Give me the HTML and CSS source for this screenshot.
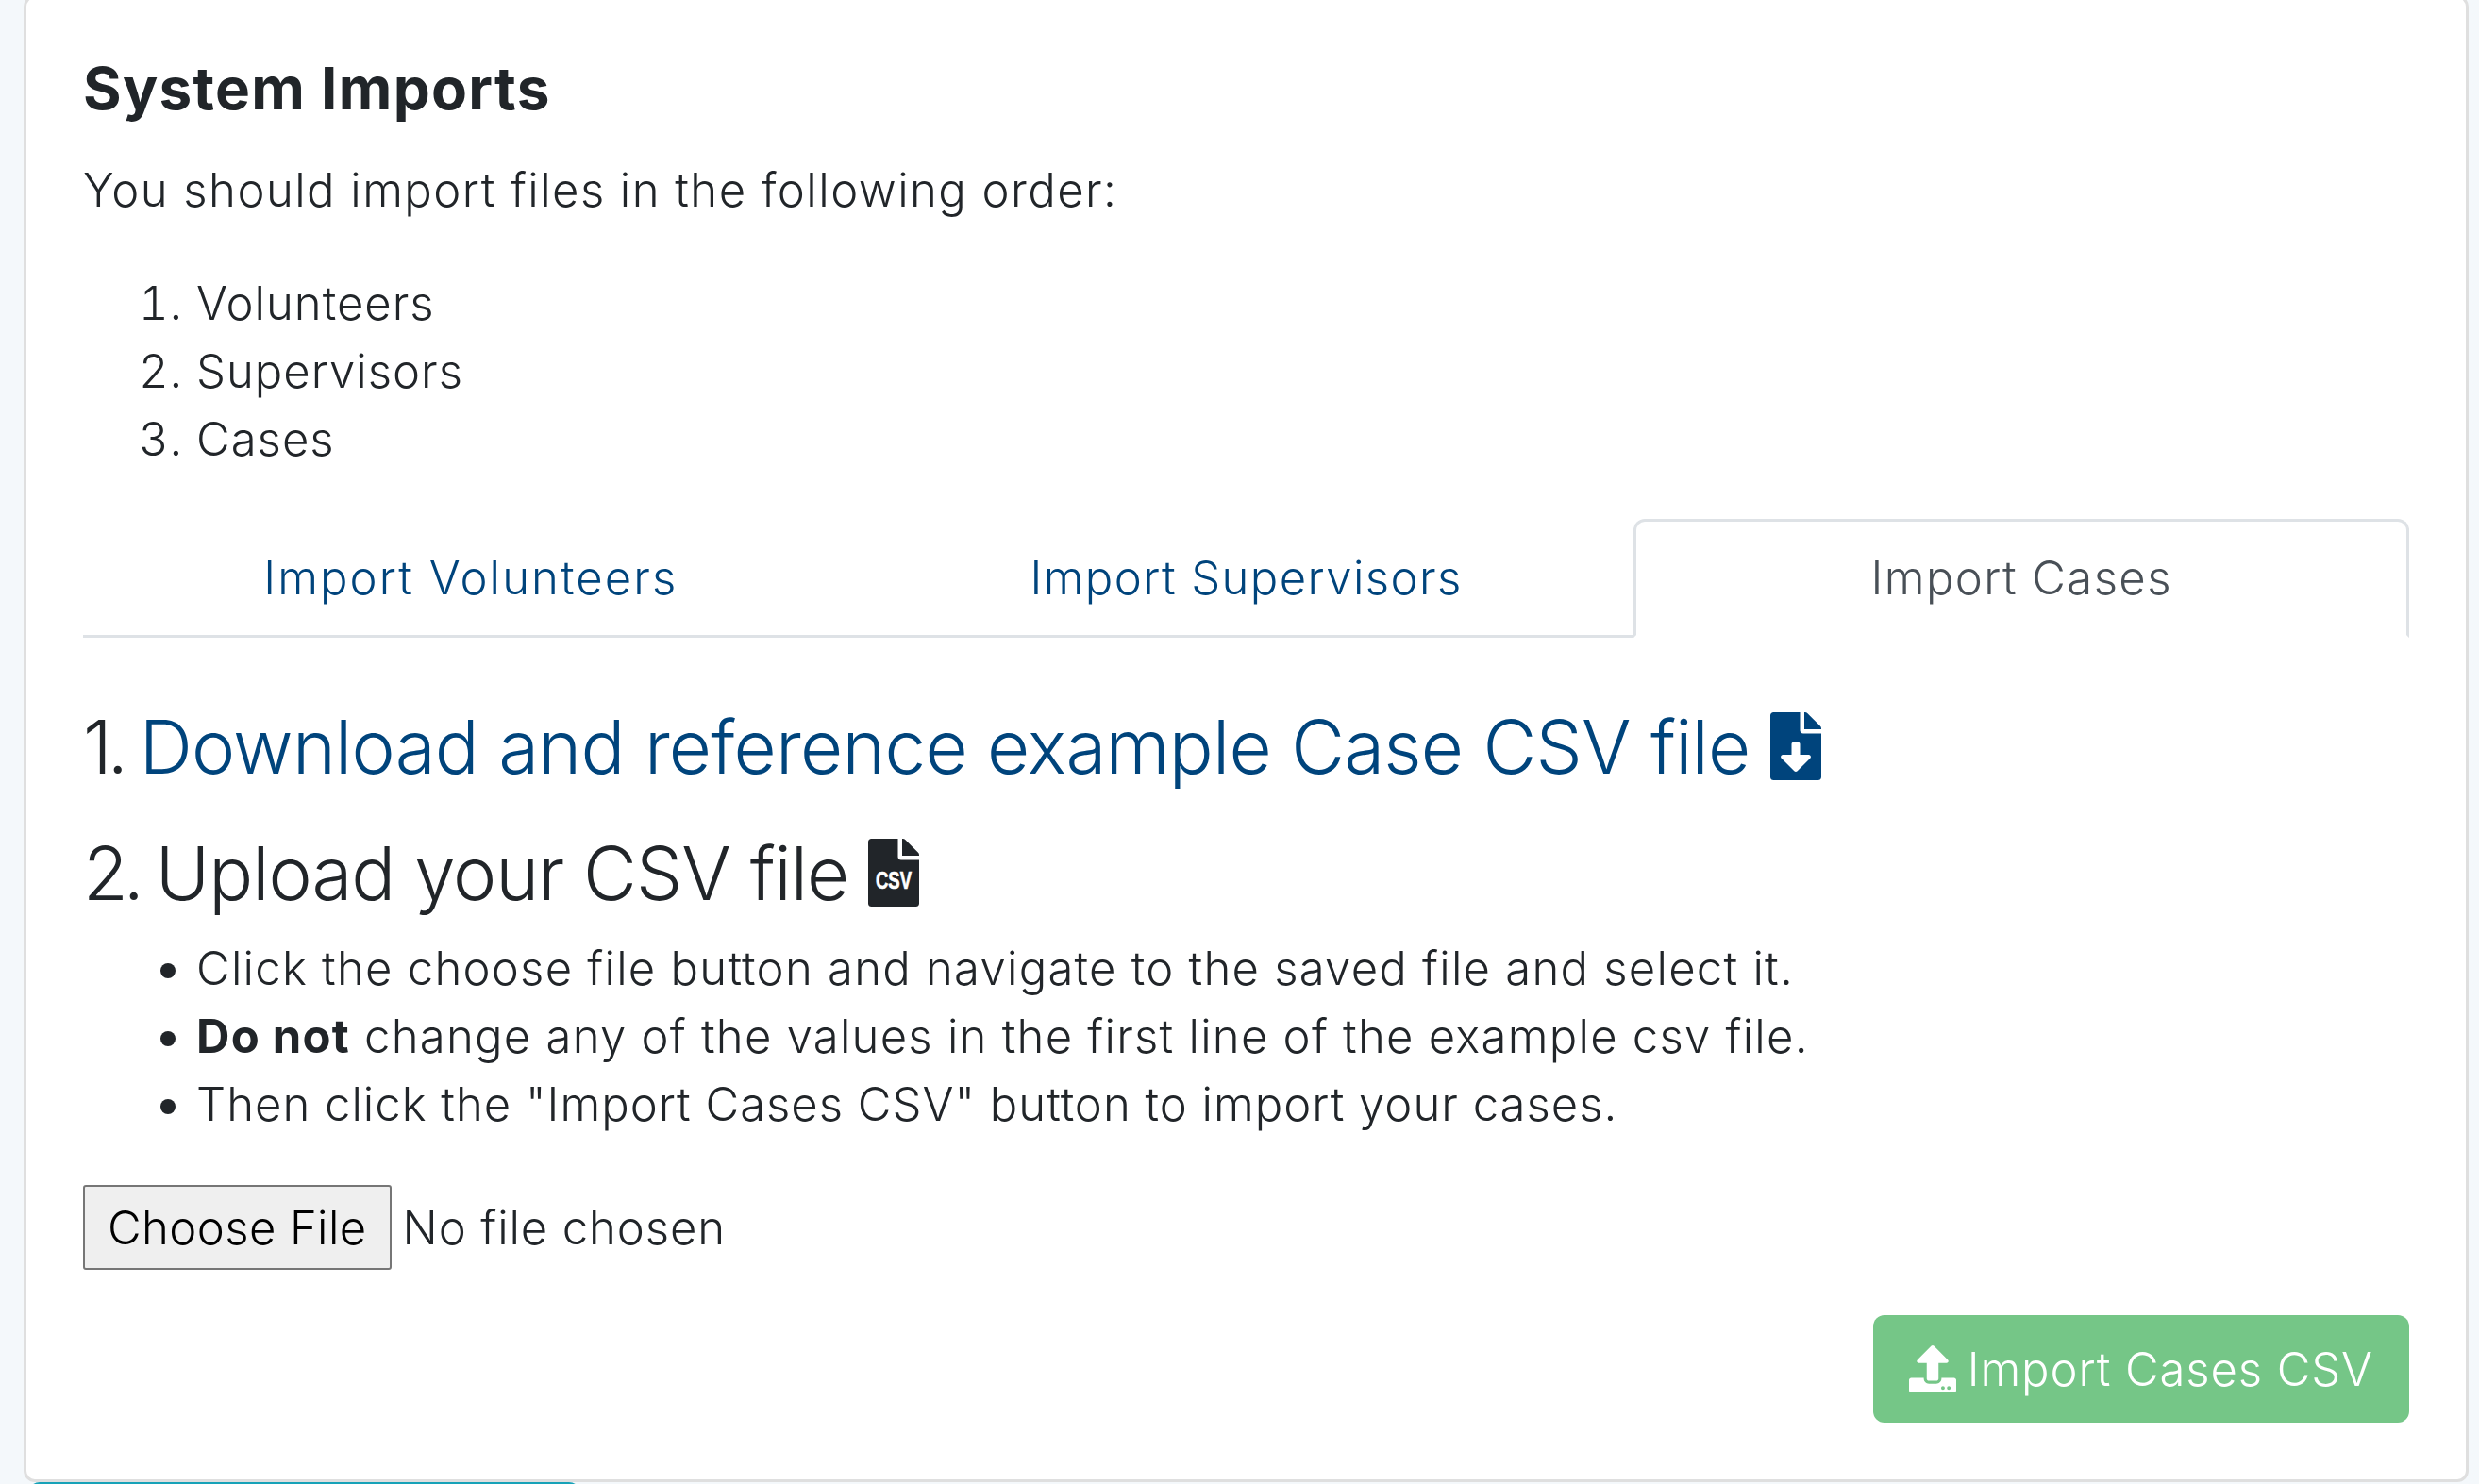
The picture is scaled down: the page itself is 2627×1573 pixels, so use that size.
FILE: index.html
```html
<!DOCTYPE html>
<html>
<head>
  <title>System Imports</title>
  <link rel="stylesheet" href="styles.css">
</head>
<body>

  <div class="card">
    <h5 class="card-title">System Imports</h5>
    <p class="intro">You should import files in the following order:</p>
    <ol class="order-list">
      <li>Volunteers</li>
      <li>Supervisors</li>
      <li>Cases</li>
    </ol>

    <ul class="tabs">
      <li><a href="#" class="tab-link tab-wide">Import Volunteers</a></li>
      <li><a href="#" class="tab-link">Import Supervisors</a></li>
      <li><a href="#" class="tab-link active">Import Cases</a></li>
    </ul>

    <div class="tab-content">
      <h3 class="step"><span class="step-num">1. </span><a href="#" class="step-link">Download and reference example Case CSV file
        <svg class="step-icon" viewBox="0 0 384 512"><path d="M224 136V0H24C10.7 0 0 10.7 0 24v464c0 13.3 10.7 24 24 24h336c13.3 0 24-10.7 24-24V160H248c-13.2 0-24-10.8-24-24zm76.45 211.36l-96.42 95.7c-6.65 6.61-17.39 6.61-24.04 0l-96.42-95.7C73.42 337.29 80.54 320 94.82 320H160v-80c0-8.84 7.16-16 16-16h32c8.84 0 16 7.16 16 16v80h65.18c14.28 0 21.4 17.29 11.27 27.36zM377 105L279.1 7c-4.5-4.5-10.6-7-17-7H256v128h128v-6.1c0-6.3-2.5-12.4-7-16.9z"/></svg></a></h3>
      <h3 class="step step-upload"><span class="step-num">2. </span>Upload your CSV file
        <svg class="step-icon" viewBox="0 0 384 512"><path d="M224 136V0H24C10.7 0 0 10.7 0 24v464c0 13.3 10.7 24 24 24h336c13.3 0 24-10.7 24-24V160H248c-13.2 0-24-10.8-24-24zM377 105L279.1 7c-4.5-4.5-10.6-7-17-7H256v128h128v-6.1c0-6.3-2.5-12.4-7-16.9z"/><text class="csv-label" transform="translate(192 380) scale(.72 1)" text-anchor="middle">CSV</text></svg></h3>
      <ul class="steps-list">
        <li>Click the choose file button and navigate to the saved file and select it.</li>
        <li><strong>Do not</strong> change any of the values in the first line of the example csv file.</li>
        <li class="steps-last">Then click the "Import Cases CSV" button to import your cases.</li>
      </ul>

      <form class="import-form">
        <input type="file" class="file-input">
        <div class="form-actions">
          <button type="button" class="import-btn">
            <svg class="btn-icon" viewBox="0 0 512 512"><path d="M296 384h-80c-13.3 0-24-10.7-24-24V192h-87.7c-17.8 0-26.7-21.5-14.1-34.1L242.3 5.7c7.5-7.5 19.8-7.5 27.3 0l152.2 152.2c12.6 12.6 3.7 34.1-14.1 34.1H320v168c0 13.3-10.7 24-24 24zm216-8v112c0 13.3-10.7 24-24 24H24c-13.3 0-24-10.7-24-24V376c0-13.3 10.7-24 24-24h136v8c0 30.9 25.1 56 56 56h80c30.9 0 56-25.1 56-56v-8h136c13.3 0 24 10.7 24 24zm-124 88c0-11-9-20-20-20s-20 9-20 20 9 20 20 20 20-9 20-20zm64 0c0-11-9-20-20-20s-20 9-20 20 9 20 20 20 20-9 20-20z"/></svg>
            Import Cases CSV
          </button>
        </div>
      </form>
    </div>
  </div>

  <div class="next-card"></div>

</body>
</html>
```

FILE: styles.css
```css
html {
  height: 100%;
  overflow: hidden;
}

body {
  margin: 0;
  height: 100%;
  overflow: hidden;
  padding: 0 11px 0 25px;
  box-sizing: border-box;
  background-color: #f4f8fb;
  font-family: Inter, sans-serif;
  font-size: 49px;
  font-weight: 300;
  line-height: 72px;
  letter-spacing: 1.2px;
  color: #212529;
}

strong {
  font-weight: 700;
}

.card {
  margin-top: -5px;
  padding: 60px;
  height: 1576px;
  box-sizing: border-box;
  background-color: #fff;
  border: 3px solid #dfdfdf;
  border-radius: 12px;
}

.card-title {
  margin: 0 0 36px;
  font-size: 62px;
  font-weight: 700;
  line-height: 72px;
  letter-spacing: 1.3px;
}

.intro {
  margin: 0 0 48px;
  letter-spacing: 1.45px;
}

.order-list {
  margin: 0 0 48px;
  padding-left: 120px;
  letter-spacing: 1px;
}

.tabs {
  display: flex;
  margin: 0;
  padding: 0;
  list-style: none;
  border-bottom: 3px solid #dee2e6;
}

.tabs li {
  flex: 1;
  margin-bottom: -3px;
}

.tab-link {
  display: block;
  padding: 24px 48px;
  text-align: center;
  text-decoration: none;
  letter-spacing: 1.4px;
  color: #00447c;
  border: 3px solid transparent;
  border-radius: 12px 12px 0 0;
}

.tab-wide {
  letter-spacing: 2.1px;
}

.tab-link.active {
  color: #495057;
  background-color: #fff;
  border-color: #dee2e6 #dee2e6 #fff;
}

.tab-content {
  padding-top: 65px;
}

.step {
  margin: 0 0 33px;
  font-size: 78px;
  font-weight: 300;
  line-height: 101px;
  letter-spacing: -0.75px;
}

.step-upload {
  margin-bottom: 15px;
  letter-spacing: -1px;
}

.step-num {
  letter-spacing: -5px;
}

.step-link {
  color: #00447c;
  text-decoration: none;
}

.step-icon {
  width: 54px;
  height: 72px;
  fill: currentColor;
  vertical-align: -7px;
  overflow: visible;
}

.csv-label {
  font-family: "Liberation Sans", sans-serif;
  font-size: 182px;
  font-weight: 700;
  letter-spacing: 0;
  fill: #fff;
  stroke: #fff;
  stroke-width: 5px;
}

.steps-list {
  margin: 0 0 49px;
  padding-left: 120px;
  letter-spacing: 1.25px;
}

.steps-last {
  letter-spacing: 1px;
}

.file-input {
  display: block;
  font-family: inherit;
  font-size: inherit;
  font-weight: inherit;
  letter-spacing: 0.9px;
  color: inherit;
}

.file-input::file-selector-button {
  height: 90px;
  margin-right: 12px;
  padding: 0 24px;
  font-family: inherit;
  font-size: inherit;
  font-weight: inherit;
  letter-spacing: 0.4px;
  color: #000;
  background-color: #efefef;
  border: 2px solid #767676;
  border-radius: 3px;
}

.form-actions {
  display: flex;
  justify-content: flex-end;
  margin-top: 48px;
}

.import-btn {
  display: flex;
  align-items: center;
  gap: 12px;
  height: 114px;
  padding: 0 38px;
  font-family: inherit;
  font-size: inherit;
  font-weight: inherit;
  letter-spacing: 0.9px;
  color: #fff;
  background-color: #75c687;
  border: none;
  border-radius: 12px;
}

.btn-icon {
  width: 50px;
  height: 50px;
  fill: #fff;
}

.next-card {
  width: 585px;
  height: 12px;
  margin-left: 5px;
  background-color: #17a2b8;
  border-radius: 12px 12px 0 0;
}
```
